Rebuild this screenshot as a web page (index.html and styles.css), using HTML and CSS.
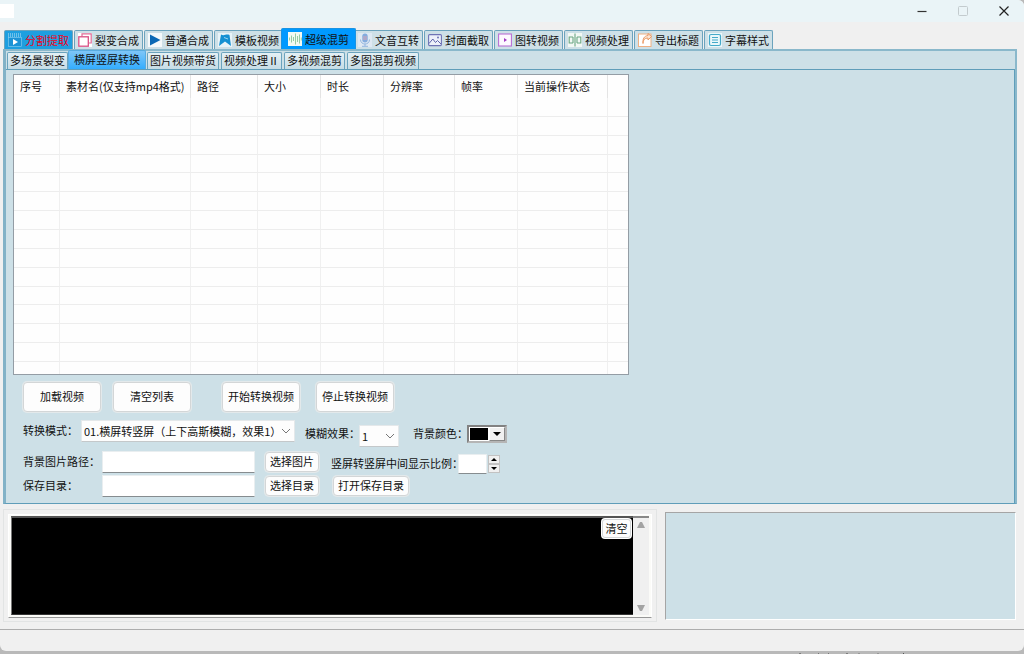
FILE: index.html
```html
<!DOCTYPE html>
<html lang="zh-CN">
<head>
<meta charset="utf-8">
<title>视频工具</title>
<link rel="stylesheet" href="styles.css">
</head>
<body>
<div class="window">
    <div class="titlebar">
        <span class="app-icon"></span>
        <button type="button" class="win-btn" aria-label="最小化">
            <svg width="12" height="12" viewBox="0 0 12 12"><path d="M1.500 6.500h9" stroke="#333" stroke-width="1.200"/></svg>
        </button>
        <button type="button" class="win-btn" aria-label="最大化" disabled>
            <svg width="12" height="12" viewBox="0 0 12 12"><rect x="1.500" y="1.500" width="9" height="9" rx="1" fill="none" stroke="#c3cbce"/></svg>
        </button>
        <button type="button" class="win-btn" aria-label="关闭">
            <svg width="12" height="12" viewBox="0 0 12 12"><path d="M1.500 1.500l9 9M10.500 1.500l-9 9" stroke="#222" stroke-width="1.200"/></svg>
        </button>
    </div>

    <div class="main-tabs" role="tablist">
        <button type="button" class="tab red" role="tab">
            <svg class="icon" viewBox="0 0 14 14"><rect width="14" height="14" fill="#1e9fe0"/><path d="M0 1h14M0 3h14" stroke="#bfe3f5" stroke-dasharray="1 1"/><rect x=".5" y="4.500" width="13" height="9" fill="#1c93d6" stroke="#8fd0ef" stroke-width=".6"/><path d="M5 6v6l5-3z" fill="#fff"/></svg>分割提取</button>
        <button type="button" class="tab" role="tab">
            <svg class="icon" viewBox="0 0 14 14"><rect width="14" height="14" fill="#fff"/><path d="M4 3.500V.8h9.200V10h-2.700" fill="none" stroke="#e06a96" stroke-width="1.200"/><rect x=".8" y="3.800" width="9.500" height="9.400" fill="#fff" stroke="#d94f84" stroke-width="1.300"/></svg>裂变合成</button>
        <button type="button" class="tab" role="tab">
            <svg class="icon" viewBox="0 0 14 14"><rect width="14" height="14" fill="#f4f8fa"/><path d="M2 1.500v11L12.500 7z" fill="#0b68b5"/></svg>普通合成</button>
        <button type="button" class="tab" role="tab">
            <svg class="icon" viewBox="0 0 14 14"><rect width="14" height="14" fill="#e8f3f8"/><path d="M3 1.500C6 3.500 8 .5 11.500 2L13 13 7 8.500 1 13z" fill="#1590d2"/><path d="M6 4.500l4 1.500" stroke="#9bd4f0"/></svg>模板视频</button>
        <button type="button" class="tab active" role="tab" aria-selected="true">
            <svg class="icon" viewBox="0 0 14 14"><rect width="14" height="14" fill="#f4faf2"/><path d="M1.500 5.500v3M3.500 3.500v7M5.500 5v4M7.500 1.500v11M9.500 4v6M11.500 2.500v9M13.300 5.500v3" stroke="#8cc79a" stroke-width=".9"/></svg>超级混剪</button>
        <button type="button" class="tab" role="tab">
            <svg class="icon" viewBox="0 0 14 14"><rect width="14" height="14" fill="#dfe9f3"/><rect x="4.300" y=".5" width="5.400" height="9" rx="2.700" fill="#84acde"/><path d="M5 4h4M5 6h4" stroke="#d9a4b4"/><path d="M2.500 6.500c0 6 9 6 9 0M7 11v2M4 13.300h6" fill="none" stroke="#91b5df"/></svg>文音互转</button>
        <button type="button" class="tab" role="tab">
            <svg class="icon" viewBox="0 0 14 14"><rect x=".6" y="1.600" width="12.800" height="11" rx="1" fill="#edf1fa" stroke="#6f74b5" stroke-width="1.100"/><path d="M1 10.500L4.800 6l2.700 3.500L9.500 7.500 13 11" fill="none" stroke="#5f64ac"/><circle cx="10" cy="4.500" r="1" fill="#6f74b5"/></svg>封面截取</button>
        <button type="button" class="tab" role="tab">
            <svg class="icon" viewBox="0 0 14 14"><rect x=".6" y="1" width="12.800" height="12" fill="#fdf8ff" stroke="#b86fd3" stroke-width="1.100"/><path d="M6 5v4l3-2z" fill="#a33bc4"/></svg>图转视频</button>
        <button type="button" class="tab" role="tab">
            <svg class="icon" viewBox="0 0 14 14"><rect width="14" height="14" fill="#f2f8f5"/><path d="M7 .5v13M5 4H1.200v6H5M9 4h3.800v6H9M5 4v6M9 4v6" fill="none" stroke="#6ba683" stroke-width="1.100"/></svg>视频处理</button>
        <button type="button" class="tab" role="tab">
            <svg class="icon" viewBox="0 0 14 14"><rect x=".5" y="1" width="12.500" height="12.500" fill="#fff" stroke="#efb083"/><path d="M5 10.500C5 7 6.500 5 10 5v2l3.500-3.500L10 .5v2C6 3 4.500 6 5 10.500z" fill="#fbe5d5" stroke="#e8925a" stroke-width=".9"/></svg>导出标题</button>
        <button type="button" class="tab" role="tab">
            <svg class="icon" viewBox="0 0 14 14"><rect width="14" height="14" fill="#eaf7fa"/><rect x="1.500" y="1.500" width="11" height="11" rx="1.500" fill="none" stroke="#45a9c9" stroke-width="1.200"/><path d="M4 4.500h6M4 7h6M4 9.500h6" stroke="#45a9c9"/></svg>字幕样式</button>
    </div>

    <div class="main-panel">
        <div class="sub-tabs" role="tablist">
            <button type="button" class="sub-tab" role="tab">多场景裂变</button>
            <button type="button" class="sub-tab active" role="tab" aria-selected="true">横屏竖屏转换</button>
            <button type="button" class="sub-tab" role="tab">图片视频带货</button>
            <button type="button" class="sub-tab" role="tab">视频处理Ⅱ</button>
            <button type="button" class="sub-tab" role="tab">多视频混剪</button>
            <button type="button" class="sub-tab" role="tab">多图混剪视频</button>
        </div>

        <div class="sub-panel">
            <div class="list">
                <table>
                    <colgroup>
                        <col class="c-no"><col class="c-name"><col class="c-path"><col class="c-size"><col class="c-size"><col class="c-res"><col class="c-fps"><col class="c-state"><col>
                    </colgroup>
                    <thead>
                        <tr><th>序号</th><th>素材名(仅支持mp4格式)</th><th>路径</th><th>大小</th><th>时长</th><th>分辨率</th><th>帧率</th><th>当前操作状态</th><th></th></tr>
                    </thead>
                    <tbody>
                        <tr><td></td><td></td><td></td><td></td><td></td><td></td><td></td><td></td><td></td></tr>
                        <tr><td></td><td></td><td></td><td></td><td></td><td></td><td></td><td></td><td></td></tr>
                        <tr><td></td><td></td><td></td><td></td><td></td><td></td><td></td><td></td><td></td></tr>
                        <tr><td></td><td></td><td></td><td></td><td></td><td></td><td></td><td></td><td></td></tr>
                        <tr><td></td><td></td><td></td><td></td><td></td><td></td><td></td><td></td><td></td></tr>
                        <tr><td></td><td></td><td></td><td></td><td></td><td></td><td></td><td></td><td></td></tr>
                        <tr><td></td><td></td><td></td><td></td><td></td><td></td><td></td><td></td><td></td></tr>
                        <tr><td></td><td></td><td></td><td></td><td></td><td></td><td></td><td></td><td></td></tr>
                        <tr><td></td><td></td><td></td><td></td><td></td><td></td><td></td><td></td><td></td></tr>
                        <tr><td></td><td></td><td></td><td></td><td></td><td></td><td></td><td></td><td></td></tr>
                        <tr><td></td><td></td><td></td><td></td><td></td><td></td><td></td><td></td><td></td></tr>
                        <tr><td></td><td></td><td></td><td></td><td></td><td></td><td></td><td></td><td></td></tr>
                        <tr><td></td><td></td><td></td><td></td><td></td><td></td><td></td><td></td><td></td></tr>
                        <tr><td></td><td></td><td></td><td></td><td></td><td></td><td></td><td></td><td></td></tr>
                        <tr><td></td><td></td><td></td><td></td><td></td><td></td><td></td><td></td><td></td></tr>
                    </tbody>
                </table>
            </div>

            <div class="actions">
                <button type="button" class="btn big">加载视频</button>
                <button type="button" class="btn big">清空列表</button>
                <button type="button" class="btn big start">开始转换视频</button>
                <button type="button" class="btn big stop">停止转换视频</button>
            </div>

            <div class="row mode-row">
                <label for="mode">转换模式：</label>
                <span class="drop drop-mode">
                    <select id="mode"><option>01.横屏转竖屏（上下高斯模糊，效果1）</option></select>
                    <svg width="10" height="6" viewBox="0 0 10 6"><path d="M1 1l4 4 4-4" fill="none" stroke="#777"/></svg>
                </span>
                <div class="mode-rest">
                    <label for="blur">模糊效果：</label>
                    <span class="drop drop-blur">
                        <select id="blur"><option>1</option></select>
                        <svg width="10" height="6" viewBox="0 0 10 6"><path d="M1 1l4 4 4-4" fill="none" stroke="#777"/></svg>
                    </span>
                    <label for="color">背景颜色：</label>
                    <button type="button" class="color" id="color">
                        <span class="swatch"></span>
                        <span class="arrow"><svg width="8" height="4" viewBox="0 0 8 4"><path d="M0 0h8L4 4z"/></svg></span>
                    </button>
                </div>
            </div>

            <div class="row">
                <label for="bgPath" class="path-label">背景图片路径：</label>
                <input type="text" id="bgPath" class="path">
                <button type="button" class="btn small">选择图片</button>
                <label for="ratio" class="ratio-label">竖屏转竖屏中间显示比例：</label>
                <input type="text" id="ratio" class="ratio">
                <span class="spin">
                    <button type="button" aria-label="增加"><svg width="6" height="3" viewBox="0 0 6 3"><path d="M0 3h6L3 0z"/></svg></button>
                    <button type="button" aria-label="减少"><svg width="6" height="3" viewBox="0 0 6 3"><path d="M0 0h6L3 3z"/></svg></button>
                </span>
            </div>

            <div class="row">
                <label for="savePath" class="path-label">保存目录：</label>
                <input type="text" id="savePath" class="path">
                <button type="button" class="btn small">选择目录</button>
                <button type="button" class="btn small open">打开保存目录</button>
            </div>
        </div>
    </div>

    <div class="bottom">
        <div class="log-group">
            <div class="log-frame">
                <div class="log"><button type="button" class="btn clear">清空</button></div>
                <div class="scrollbar">
                    <svg width="8" height="6" viewBox="0 0 8 6"><path d="M0 6h8L5 0H3z" fill="#a3a3a3"/></svg>
                    <svg width="8" height="6" viewBox="0 0 8 6"><path d="M0 0h8L5 6H3z" fill="#a3a3a3"/></svg>
                </div>
            </div>
        </div>
        <div class="preview"></div>
    </div>

    <div class="statusbar"></div>
</div>
<!-- edge of the desktop below the window -->
<div class="desktop">
    <svg width="130" height="3" viewBox="0 0 130 3"><path d="M9 3l3-3 3 3zM56 3l3-3 3 3z" fill="#444"/><path d="M30 0l3 3M41 0l-3 3M71 0v3M90 0v3" stroke="#777"/><path d="M115.500 0v3" stroke="#555"/></svg>
</div>
</body>
</html>
```

FILE: styles.css
```css
* { box-sizing: border-box; }
body { margin: 0; min-height: 100vh; display: flex; flex-direction: column; background: #b9b9b9; font-family: "Noto Sans CJK SC", sans-serif; font-size: 11px; line-height: 16px; color: #111; }
button, input, select { margin: 0; padding: 0; font: inherit; color: inherit; }
button { display: flex; align-items: center; justify-content: center; white-space: nowrap; }
label { padding-bottom: 2px; white-space: nowrap; }

.window { flex: 1; display: flex; flex-direction: column; background: #f0f0f0; border-radius: 0 6px 6px 6px; overflow: hidden; }

/* title bar */
.titlebar { display: flex; align-items: center; height: 22px; background: #eaf4f7; }
.app-icon { width: 14px; height: 14px; margin-right: auto; background: #fff; }
.win-btn { width: 41px; height: 22px; border: 0; background: none; }

/* outer tabs */
.main-tabs { display: flex; align-items: flex-end; gap: 1px; height: 27px; padding-left: 4px; }
.tab { width: 69px; height: 19px; gap: 3px; border: 1px solid #6ba3bd; border-bottom: 0; border-radius: 2px 2px 0 0; background: #cee0e7; line-height: 14px; }
.tab .icon { width: 14px; height: 14px; flex: none; }
.tab.red { background: #1e9fe0; color: #f00018; }
.tab.active { width: 75px; height: 21px; margin: 0 -3px; z-index: 1; border-color: #1b93e2; background: #0099ff; }

/* inner tabs */
.main-panel { margin: 0 7px 0 3px; border: 1px solid #5f9db9; border-top: 2px solid #8ab8cb; border-right: 2px solid #8ab8cb; border-left: 3px solid #82b2c7; background: #cde0e7; }
.sub-tabs { display: flex; align-items: flex-end; gap: 2px; height: 18px; padding-left: 1px; }
.sub-tab { height: 17px; padding: 0 2px 2px; border: 1px solid #6ba3bd; border-bottom: 0; border-radius: 2px 2px 0 0; background: linear-gradient(#e4f0f5, #c6dce5); }
.sub-tab.active { height: 19px; margin: 0 -1px 0 -2px; padding: 0 5px 2px; border-color: #57abe0; background: linear-gradient(#7fc6f7, #33adff); }
.sub-panel { padding: 4px 7px 4px; border-top: 1px solid #5f9db9; border-right: 1px solid #5f9db9; }

/* file list */
.list { max-width: 616px; height: 301px; border: 1px solid #949da5; background: #fefefe; overflow: hidden; }
table { width: 100%; height: 306px; border-collapse: separate; border-spacing: 0; table-layout: fixed; }
thead tr { height: 23px; }
th { padding: 0 5px 1px 6px; border-right: 1px solid #e4e4e4; font-weight: normal; text-align: left; white-space: nowrap; }
td { padding: 0; border-right: 1px solid #f0f0f0; border-bottom: 1px solid #ededed; }
th:last-child, td:last-child { border-right: 0; }
.c-no { width: 46px; }
.c-name { width: 131px; }
.c-path { width: 67px; }
.c-size { width: 63px; }
.c-res { width: 71px; }
.c-fps { width: 63px; }
.c-state { width: 90px; }

/* buttons */
.btn { padding-bottom: 2px; border: 1px solid #d3d6d7; border-radius: 4px; background: #fdfdfd; box-shadow: 0 0 0 1px #e3e9eb; }
.actions { display: flex; gap: 12px; padding: 7px 0 8px 10px; }
.big { width: 78px; height: 30px; }
.start { margin-left: 19px; }
.stop { margin-left: 4px; }
.small { width: 54px; height: 20px; margin-left: 10px; }
.open { width: 76px; margin-left: 14px; }

/* options */
.row { display: flex; align-items: center; height: 22px; margin-bottom: 2px; padding-left: 10px; }
.mode-row { height: 28px; margin-bottom: 3px; align-items: flex-start; }
.mode-row > label { width: 58px; margin-top: 2px; }
.mode-rest { display: flex; align-items: flex-start; margin: 5px 0 0 10px; }
.mode-rest label { width: 54px; }
.drop { display: grid; grid-template-columns: 1fr 18px; align-items: center; height: 22px; }
.drop select { grid-area: 1 / 1 / 2 / 3; width: 100%; height: 22px; padding-left: 2px; border: 1px solid #e4e8ea; border-bottom-color: #c4c8ca; border-radius: 0; background: #fdfdfd; appearance: none; }
.drop svg { grid-area: 1 / 2; z-index: 1; margin-left: 4px; pointer-events: none; }
.drop-mode { width: 214px; }
.drop-blur { width: 40px; margin-right: 14px; }
.color { width: 40px; height: 18px; justify-content: flex-start; border: 2px solid; border-color: #828282 #b5b5b5 #b5b5b5 #828282; background: #fff; }
.swatch { width: 18px; height: 12px; margin: 0 1px; background: #000; }
.arrow { flex: 1; display: flex; align-items: center; justify-content: center; height: 14px; border: 1px solid; border-color: #fff #888 #888 #fff; background: #f0f0f0; }
.path-label { width: 79px; }
input[type=text] { height: 22px; border: 1px solid #e9eef0; border-bottom-color: #868c8f; background: #fff; }
.path { width: 153px; }
.ratio-label { width: 127px; margin: 4px 0 0 12px; }
input.ratio { width: 29px; height: 20px; margin-top: 4px; }
.spin { display: flex; flex-direction: column; width: 12px; height: 18px; margin: 3px 0 0 1px; }
.spin button { flex: 1; border: 1px solid #c2c2c2; background: #f0f0f0; }

/* log and preview */
.bottom { display: grid; grid-template-columns: 654fr 351fr; gap: 8px; margin: 5px 8px 0 3px; }
.log-group { padding: 4px 4px 3px; border: 1px solid #e2e4e4; }
.log-frame { display: flex; height: 104px; padding: 1px 2px 2px; border-top: 1px solid #fff; border-right: 1px solid #fff; border-left: 1px solid #fff; border-bottom: 1px solid #969696; background: #fbfbf8; }
.log { flex: 1; display: flex; align-items: flex-start; justify-content: flex-end; border-top: 2px solid #555; border-left: 1px solid #777; border-bottom: 1px solid #333; background: #000; }
.clear { width: 29px; height: 19px; margin: 1px 2px 0 0; border-radius: 3px; box-shadow: 0 0 0 1px #fff; }
.scrollbar { display: flex; flex-direction: column; justify-content: space-between; align-items: center; width: 16px; padding: 4px 0; border-top: 2px solid #888; background: #f0f0f0; }
.preview { margin: 3px 0 2px; border: 1px solid #fff; border-top-color: #a5a5a5; border-left-color: #a5a5a5; background: #cde0e7; }

.statusbar { height: 22px; margin-top: 7px; border-top: 1px solid #adadad; }
.desktop { height: 3px; padding-left: 788px; line-height: 0; background: #b9b9b9; }
```
